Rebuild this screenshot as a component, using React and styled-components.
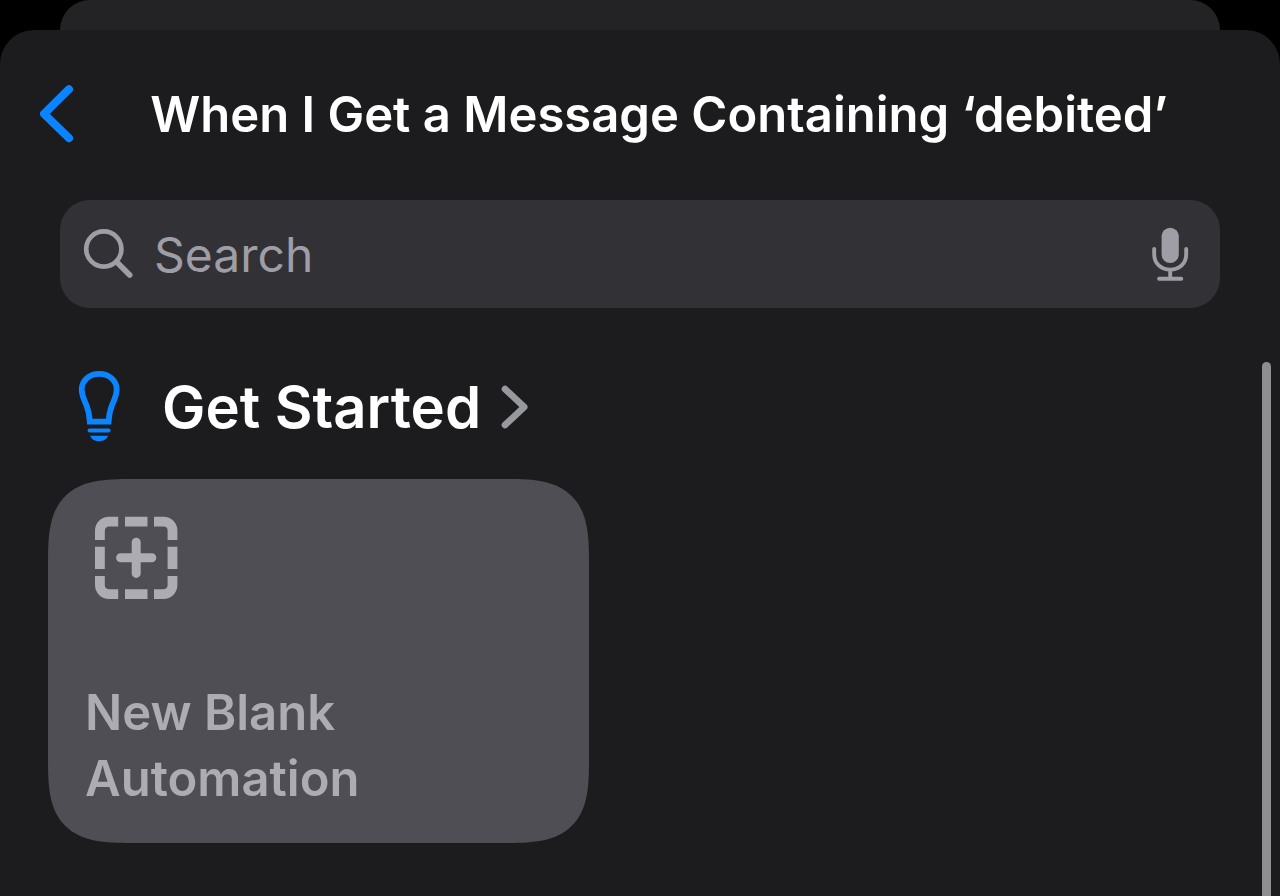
import React from "react";
import styled, { createGlobalStyle } from "styled-components";

const GlobalStyle = createGlobalStyle`
  *, *::before, *::after { box-sizing: border-box; }
  body {
    margin: 0;
    background: #000;
    font-family: Inter, "Liberation Sans", sans-serif;
    -webkit-font-smoothing: antialiased;
  }
  button, input { font: inherit; }
`;

const Screen = styled.div`
  display: flex;
  flex-direction: column;
  min-height: 100vh;
  background: #000;
`;

const BackSheet = styled.div`
  height: 30px;
  margin: 0 60px;
  border-radius: 30px 30px 0 0;
  background: #232325;
`;

const Sheet = styled.div`
  flex: 1;
  display: flex;
  flex-direction: column;
  border-radius: 34px 34px 0 0;
  background: #1c1c1e;
`;

const Header = styled.header`
  display: flex;
  align-items: center;
  height: 170px;
  padding: 0 40px;
`;

const IconButton = styled.button`
  display: flex;
  flex: none;
  padding: 0;
  border: 0;
  background: none;
  color: ${(p) => p.$color};
  cursor: pointer;
`;

const Title = styled.h1`
  flex: 1;
  margin: 0;
  padding-left: 4px;
  color: #fff;
  font-size: 49px;
  font-weight: 600;
  line-height: 60px;
  text-align: center;
`;

const SearchBar = styled.label`
  display: flex;
  align-items: center;
  gap: 20px;
  height: 108px;
  margin: 0 60px;
  padding: 0 31px 0 22px;
  border-radius: 30px;
  background: #323236;
  color: #9f9ea6;
`;

const SearchInput = styled.input`
  flex: 1;
  min-width: 0;
  height: 66px;
  padding: 0;
  border: 0;
  outline: 0;
  background: none;
  color: #fff;
  font-size: 48px;
  &::placeholder { color: #9f9ea6; opacity: 1; }
`;

const Body = styled.div`
  flex: 1;
  display: flex;
  padding: 54px 9px 0 48px;
`;

const Content = styled.main`
  flex: 1;
  padding-bottom: 53px;
`;

const ScrollThumb = styled.div`
  flex: none;
  width: 9px;
  border-radius: 5px 5px 0 0;
  background: #8e8e90;
`;

const SectionLink = styled.a`
  display: inline-flex;
  align-items: center;
  height: 90px;
  padding-left: 30px;
  color: #fff;
  text-decoration: none;
`;

const SectionTitle = styled.h2`
  margin: 0 20px 0 42px;
  font-size: 58px;
  font-weight: 600;
  line-height: 72px;
`;

const Card = styled.button`
  display: flex;
  flex-direction: column;
  align-items: flex-start;
  justify-content: space-between;
  width: 541px;
  max-width: 100%;
  min-height: 364px;
  margin-top: 27px;
  padding: 37px 37px 31px;
  border: 0;
  border-radius: 60px;
  background: #4f4e54;
  color: #adacb3;
  font-size: 49px;
  font-weight: 600;
  line-height: 66px;
  text-align: left;
  cursor: pointer;

  @supports (corner-shape: superellipse(1.6)) {
    border-radius: 84px;
    corner-shape: superellipse(1.6);
  }
`;

const CardIcon = styled.svg`
  margin-left: 9px;
`;

const CardLabel = styled.span`
  max-width: 320px;
`;

const BackIcon = () => (
  <svg width="34" height="60" viewBox="0 0 34 60" fill="none" aria-hidden="true">
    <path d="M29 4.2 4 28.8 29 53.2" stroke="currentColor" strokeWidth="8" strokeLinecap="round" strokeLinejoin="round" />
  </svg>
);

const SearchIcon = () => (
  <svg width="52" height="54" viewBox="0 0 52 54" fill="none" stroke="currentColor" aria-hidden="true">
    <circle cx="21.8" cy="22" r="17.6" strokeWidth="4.7" />
    <path d="M34.5 34.8 47.7 48" strokeWidth="5.6" strokeLinecap="round" />
  </svg>
);

const MicIcon = () => (
  <svg width="38" height="54" viewBox="0 0 38 54" fill="none" stroke="currentColor" aria-hidden="true">
    <rect x="10.6" y="0.7" width="17.2" height="35.4" rx="8.6" fill="currentColor" stroke="none" />
    <path d="M3.2 22v5.2c0 9.3 6.700 15.400 16 15.400s16-6.100 16-15.400V22M19.2 43v8" strokeWidth="3.9" strokeLinecap="round" />
    <path d="M8.1 51.700H30.3" strokeWidth="3.9" strokeLinecap="round" />
  </svg>
);

const BulbIcon = () => (
  <svg width="42" height="72" viewBox="0 0 42 72" fill="none" aria-hidden="true">
    <path
      d="M11.800 50.600C11.400 43.800 10.200 38.400 8 33.200C6.200 28.600 3.700 25 3.700 18.600C3.700 9.400 11.200 2.900 21.200 2.900S38.700 9.400 38.700 18.600C38.700 25 36.200 28.600 34.400 33.200C32.200 38.400 31 43.800 30.600 50.600Z"
      stroke="#0a84ff"
      strokeWidth="5.800"
    />
    <rect x="9.6" y="57.4" width="23" height="4.2" rx="2.1" fill="#0a84ff" />
    <path d="M12.200 64.800h17.800c-1 3.400-4.600 5.500-8.900 5.500s-7.900-2.100-8.900-5.500Z" fill="#0a84ff" />
  </svg>
);

const DisclosureIcon = () => (
  <svg width="28" height="44" viewBox="0 0 28 44" fill="none" aria-hidden="true">
    <path d="M4 4 23.200 22 4 40" stroke="#98989f" strokeWidth="6.600" strokeLinecap="round" strokeLinejoin="round" />
  </svg>
);

const BlankIcon = () => (
  <CardIcon width="85" height="85" viewBox="0 0 85 85" fill="none" stroke="currentColor" aria-hidden="true">
    <g strokeWidth="9.8">
      <path d="M5.900 24V14.700a9 9 0 0 1 9-9H24.200" />
      <path d="M60 5.700h9.500a9 9 0 0 1 9 9V24" />
      <path d="M78.500 60v9.100a9 9 0 0 1-9 9H60" />
      <path d="M24.200 78.100H14.900a9 9 0 0 1-9-9V60" />
      <path d="M31 5.700H53.500M31 78.100H53.500M5.900 30.700V53M78.500 30.700V53" />
    </g>
    <path d="M42.200 26.200V57.400M26.600 41.800H57.800" strokeWidth="9" strokeLinecap="round" />
  </CardIcon>
);

export default function App() {
  return (
    <Screen>
      <GlobalStyle />
      <BackSheet />
      <Sheet>
        <Header>
          <IconButton type="button" aria-label="Back" $color="#0a84ff">
            <BackIcon />
          </IconButton>
          <Title>When I Get a Message Containing ‘debited’</Title>
        </Header>
        <SearchBar>
          <SearchIcon />
          <SearchInput type="text" placeholder="Search" aria-label="Search" />
          <IconButton type="button" aria-label="Dictate" $color="#9f9ea6">
            <MicIcon />
          </IconButton>
        </SearchBar>
        <Body>
          <Content>
            <SectionLink href="#get-started">
              <BulbIcon />
              <SectionTitle>Get Started</SectionTitle>
              <DisclosureIcon />
            </SectionLink>
            <Card type="button">
              <BlankIcon />
              <CardLabel>New Blank Automation</CardLabel>
            </Card>
          </Content>
          <ScrollThumb />
        </Body>
      </Sheet>
    </Screen>
  );
}
